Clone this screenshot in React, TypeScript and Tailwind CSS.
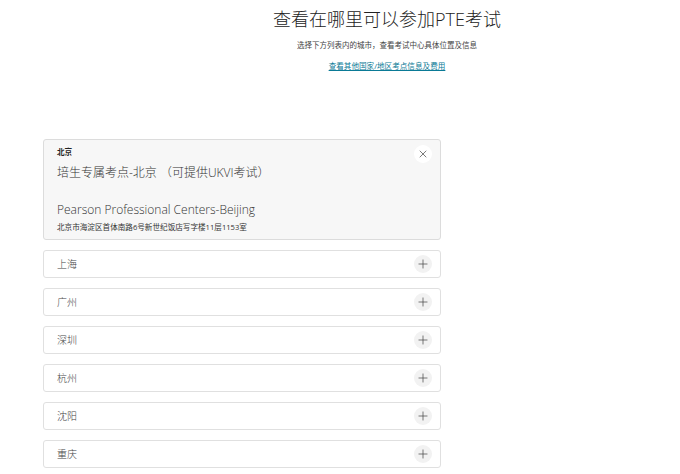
import { Plus, X } from "lucide-react";

const cities = ["上海", "广州", "深圳", "杭州", "沈阳", "重庆"];

export default function App() {
  return (
    <div className="w-[680px] h-[474px] overflow-hidden bg-white font-['Open_Sans','Noto_Sans_CJK_SC',sans-serif] text-[#333]">
      <div className="ml-[94px] flex flex-col items-center pt-[7px]">
        <h1 className="text-[18px] leading-[24px] text-[#222] font-light">查看在哪里可以参加PTE考试</h1>
        <p className="mt-[8px] text-[7.5px] leading-[12px] text-[#444]">选择下方列表内的城市，查看考试中心具体位置及信息</p>
        <a className="mt-[9px] text-[7.6px] leading-[12px] text-[#0a7a96] underline">查看其他国家/地区考点信息及费用</a>
      </div>

      <div className="ml-[43px] mt-[67px] w-[398px] flex flex-col gap-[10px]">
        <div className="h-[101px] rounded-[3px] border border-[#dcdcdc] bg-[#f7f7f7] px-[13px] pt-[6px] relative">
          <div className="text-[7.6px] leading-[12px] font-bold text-[#222]">北京</div>
          <div className="mt-[6px] text-[12px] leading-[18px] font-light text-[#333]">培生专属考点-北京 （可提供UKVI考试）</div>
          <div className="mt-[19px] text-[12px] leading-[18px] font-light text-[#333]">Pearson Professional Centers-Beijing</div>
          <div className="mt-[2px] text-[7.6px] leading-[12px] text-[#333]">北京市海淀区首体南路6号新世纪饭店写字楼11层1153室</div>
          <div className="absolute right-[8px] top-[5px] w-[18px] h-[18px] rounded-full bg-white flex items-center justify-center">
            <X size={12} strokeWidth={1.3} color="#333" />
          </div>
        </div>
        {cities.map((c) => (
          <div key={c} className="h-[28px] rounded-[3px] border border-[#e0e0e0] bg-white px-[13px] flex items-center justify-between">
            <span className="text-[10px] font-light text-[#444]">{c}</span>
            <span className="w-[18px] h-[18px] -mr-[5px] rounded-full bg-[#f2f2f2] flex items-center justify-center">
              <Plus size={14} strokeWidth={1.2} color="#444" />
            </span>
          </div>
        ))}
      </div>
    </div>
  );
}
